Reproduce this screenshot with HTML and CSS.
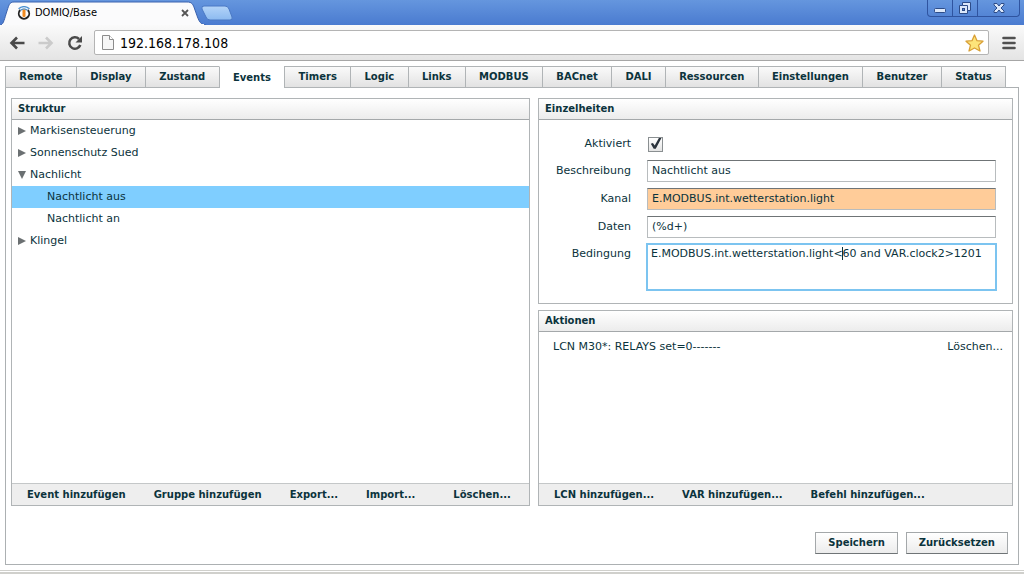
FILE: index.html
```html
<!DOCTYPE html>
<html lang="de">
<head>
<meta charset="utf-8">
<title>DOMIQ/Base</title>
<link rel="stylesheet" href="styles.css">
</head>
<body>
<header class="titlebar">
  <div class="browser-tab">
    <svg class="tab-shape" viewBox="0 0 240 24" aria-hidden="true">
      <defs>
        <linearGradient id="newtab" x1="0" y1="0" x2="0" y2="1"><stop offset="0" stop-color="#b4d4f8"/><stop offset="1" stop-color="#8cbaf0"/></linearGradient>
      </defs>
      <path d="M0 24C3 24 4 20 6 13C9 4 9 1 14 1H187C192 1 193 3 195 9C198 17 199 24 206 24Z" fill="#fbfbfc"/>
      <path d="M0 24C3 24 4 20 6 13C9 4 9 1 14 1H187C192 1 193 3 195 9C198 17 199 24 206 24" fill="none" stroke="#3b62ae"/>
      <rect x="2" y="23" width="202" height="1" fill="#fbfbfc"/>
      <path d="M204 5H225Q228 5 229 8L232 16Q233 19 230 19H210Q207 19 206 16L202 8Q201 5 204 5Z" fill="url(#newtab)" stroke="#4a78c4"/>
    </svg>
    <svg class="favicon" viewBox="0 0 14 14" aria-hidden="true">
      <path d="M3.2 4A5.2 5.2 0 1 0 10.800 4" fill="none" stroke="#222" stroke-width="1.900"/>
      <path d="M1.500 2.800Q7-1.500 12.500 2.800M3.500 4.300Q7 1.600 10.500 4.300" fill="none" stroke="#4a90d0" stroke-width="1.400"/>
      <rect x="5.500" y="3.500" width="3" height="7.500" rx="1" fill="#f08a20"/>
    </svg>
    <span class="tab-title">DOMIQ/Base</span>
    <button class="icon-btn tab-close" aria-label="Tab schließen"><svg width="8" height="8" viewBox="0 0 8 8"><path d="M1 1L7 7M7 1L1 7" stroke="#555" stroke-width="1.800"/></svg></button>
  </div>
  <div class="window-controls">
    <button aria-label="Minimieren"><svg width="14" height="14" viewBox="0 0 14 14"><rect x="1.500" y="7.500" width="11" height="4" rx="1" fill="#dce8fa" stroke="#2d4c88"/></svg></button>
    <button aria-label="Wiederherstellen"><svg width="14" height="14" viewBox="0 0 14 14"><path d="M4.500 1.500H12.500V9.500H9.500V12.500H1.500V4.500H4.500Z" fill="#dce8fa" stroke="#2d4c88"/><path d="M4.500 4.500H9.500V9.500" fill="none" stroke="#2d4c88"/><rect x="4.500" y="7.500" width="2" height="2" fill="#5a88d8" stroke="#2d4c88"/></svg></button>
    <button class="close" aria-label="Schließen"><svg width="12" height="12" viewBox="0 0 12 12"><path d="M1 1.500H4L6 4L8 1.500H11V3L8 6L11 9V10.500H8L6 8L4 10.500H1V9L4 6L1 3Z" fill="#dce8fa" stroke="#2d4c88"/></svg></button>
  </div>
</header>
<nav class="toolbar" aria-label="Navigation">
  <button class="icon-btn" aria-label="Zurück"><svg width="16" height="14" viewBox="0 0 16 14"><path d="M8 1.500L2.500 7L8 12.500M3 7H15.500" fill="none" stroke="#4a4a4a" stroke-width="2.600"/></svg></button>
  <button class="icon-btn" aria-label="Vor"><svg width="16" height="14" viewBox="0 0 16 14"><path d="M8 1.500L13.500 7L8 12.500M13 7H.5" fill="none" stroke="#cbcbcb" stroke-width="2.600"/></svg></button>
  <button class="icon-btn" aria-label="Neu laden"><svg width="16" height="16" viewBox="0 0 16 16"><path d="M13.300 10A5.700 5.700 0 1 1 12 4" fill="none" stroke="#4a4a4a" stroke-width="2.500"/><path d="M15 1V7.500H8.500Z" fill="#4a4a4a"/></svg></button>
  <div class="omnibox">
    <svg width="12" height="15" viewBox="0 0 12 15" aria-hidden="true"><path d="M.5.5H7.500L11.500 4.500V14.500H.5Z" fill="#f6f6f6" stroke="#8c8c8c"/><path d="M7.500.5V4.500H11.500" fill="#fff" stroke="#8c8c8c"/></svg>
    <input class="url" aria-label="Adresse" value="192.168.178.108">
    <button class="icon-btn" aria-label="Lesezeichen"><svg width="19" height="18" viewBox="0 0 19 18"><path d="M9.500 1L12 6.700L18 7.200L13.500 11.200L15 17L9.500 14L4 17L5.500 11.200L1 7.200L7 6.700Z" fill="#fde47a" stroke="#d9a036" stroke-width="1.300" stroke-linejoin="round"/></svg></button>
  </div>
  <button class="icon-btn menu" aria-label="Menü"><svg width="14" height="14" viewBox="0 0 14 14"><path d="M1.500 2H12.500M1.500 7H12.500M1.500 12H12.500" stroke="#505050" stroke-width="2.600" stroke-linecap="round"/></svg></button>
</nav>
<main class="app">
  <nav class="tabs" aria-label="Bereiche">
    <button>Remote</button><button>Display</button><button>Zustand</button><button class="active">Events</button><button>Timers</button><button>Logic</button><button>Links</button><button>MODBUS</button><button>BACnet</button><button>DALI</button><button>Ressourcen</button><button>Einstellungen</button><button>Benutzer</button><button>Status</button>
  </nav>
  <div class="page">
    <div class="columns">
      <section class="panel structure">
        <h2>Struktur</h2>
        <ul class="tree">
          <li><i class="arrow"></i>Markisensteuerung</li>
          <li><i class="arrow"></i>Sonnenschutz Sued</li>
          <li><i class="arrow open"></i>Nachlicht</li>
          <li class="child selected">Nachtlicht aus</li>
          <li class="child">Nachtlicht an</li>
          <li><i class="arrow"></i>Klingel</li>
        </ul>
        <footer class="actions">
          <button>Event hinzufügen</button><button>Gruppe hinzufügen</button><button>Export...</button><button>Import...</button><button class="delete">Löschen...</button>
        </footer>
      </section>
      <div class="side">
        <section class="panel">
          <h2>Einzelheiten</h2>
          <form class="details">
            <label for="active">Aktiviert</label>
            <input class="check" type="checkbox" id="active" checked>
            <label for="desc">Beschreibung</label>
            <input class="field" id="desc" value="Nachtlicht aus">
            <label for="channel">Kanal</label>
            <input class="field warn" id="channel" value="E.MODBUS.int.wetterstation.light">
            <label for="data">Daten</label>
            <input class="field" id="data" value="(%d+)">
            <label class="top" for="cond">Bedingung</label>
            <div class="area-wrap">
              <textarea class="area" id="cond" spellcheck="false">E.MODBUS.int.wetterstation.light&lt;60 and VAR.clock2&gt;1201</textarea>
              <span class="caret"></span>
            </div>
          </form>
        </section>
        <section class="panel actions-panel">
          <h2>Aktionen</h2>
          <div class="action-row"><span>LCN M30*: RELAYS set=0-------</span><button>Löschen...</button></div>
          <footer class="actions">
            <button>LCN hinzufügen...</button><button>VAR hinzufügen...</button><button>Befehl hinzufügen...</button>
          </footer>
        </section>
      </div>
    </div>
    <div class="submit">
      <button>Speichern</button><button>Zurücksetzen</button>
    </div>
  </div>
</main>
<div class="window-edge"></div>
</body>
</html>
```
FILE: styles.css
```css
* { box-sizing: border-box; }
body {
  margin: 0;
  min-height: 100vh;
  display: flex;
  flex-direction: column;
  background: #fff;
  color: #0b333c;
  font: 11px/22px "DejaVu Sans", Verdana, sans-serif;
}
button, input, textarea { font: inherit; color: inherit; margin: 0; }
button { border: 0; background: none; padding: 0; white-space: nowrap; }
svg { display: block; }
h2, ul { margin: 0; padding: 0; }

.titlebar {
  display: flex;
  justify-content: space-between;
  align-items: flex-start;
  height: 25px;
  background: linear-gradient(#6596de, #4a7bd0);
}
.browser-tab {
  position: relative;
  display: flex;
  align-items: center;
  width: 192px;
  height: 25px;
  padding-left: 17px;
  font: 11px/25px "DejaVu Sans Condensed", sans-serif;
  color: #000;
}
.tab-shape { position: absolute; left: 0; top: 1px; width: 240px; height: 24px; }
.favicon { position: relative; width: 14px; height: 14px; margin-right: 4px; }
.tab-title { position: relative; flex: 1; }
.tab-close { position: relative; margin-right: 3px; }
.icon-btn { display: flex; align-items: center; }

.window-controls {
  display: flex;
  height: 17px;
  margin-right: 4px;
  border: 1px solid #2f54a0;
  border-top: 0;
  border-radius: 0 0 4px 4px;
}
.window-controls button {
  display: flex;
  align-items: center;
  justify-content: center;
  width: 25px;
  border-right: 1px solid #2f54a0;
}
.window-controls .close { width: 41px; border-right: 0; }

.toolbar {
  display: flex;
  align-items: center;
  gap: 13px;
  height: 36px;
  padding: 0 9px;
  background: linear-gradient(#fafafa, #e4e4e4);
  border-bottom: 1px solid #a6a6a6;
}
.omnibox {
  flex: 1;
  display: flex;
  align-items: center;
  gap: 6px;
  height: 25px;
  margin-left: -2px;
  padding: 0 4px 0 7px;
  background: #fff;
  border: 1px solid #b4b4b4;
  border-radius: 2px;
}
.url {
  flex: 1;
  min-width: 0;
  border: 0;
  padding: 0;
  outline: 0;
  color: #000;
  font: 14px/20px "DejaVu Sans Condensed", sans-serif;
}
.menu { margin-right: -1px; }

.app {
  flex: 1;
  display: flex;
  flex-direction: column;
  padding: 5px;
}
.tabs { display: flex; position: relative; height: 22px; margin-right: 13px; }
.tabs button {
  flex: 1 0 auto;
  height: 22px;
  padding: 0 13px;
  border: 1px solid #b0b4b6;
  border-right: 0;
  background: linear-gradient(#fafafa, #e2e2e2);
  font-size: 10px;
  font-weight: bold;
  line-height: 20px;
}
.tabs button:last-child { border-right: 1px solid #b0b4b6; }
.tabs .active { background: #fff; border-top-color: #fff; border-bottom: 0; height: 22px; }
.page {
  flex: 1;
  display: flex;
  flex-direction: column;
  margin-top: -1px;
  padding: 10px 5px;
  border: 1px solid #acb0b2;
}
.columns {
  flex: 1;
  display: grid;
  grid-template-columns: 519fr 475fr;
  gap: 8px;
}
.side { display: flex; flex-direction: column; gap: 6px; }
.panel {
  display: flex;
  flex-direction: column;
  border: 1px solid #b0b4b6;
}
.panel h2 {
  height: 21px;
  padding: 0 6px;
  border-bottom: 1px solid #a4a8aa;
  background: linear-gradient(#fff, #ececec);
  font-size: 10px;
  line-height: 19px;
}
.tree { flex: 1; list-style: none; }
.tree li { display: flex; align-items: center; height: 22px; padding-left: 6px; }
.tree .child { padding-left: 35px; }
.tree .selected { background: #7fceff; }
.arrow {
  width: 8px;
  height: 8px;
  margin-right: 4px;
  background: #6b7072;
  clip-path: polygon(0 0, 100% 50%, 0 100%);
}
.arrow.open { clip-path: polygon(0 0, 100% 0, 50% 100%); }
.actions {
  display: flex;
  gap: 28px;
  height: 22px;
  padding-left: 15px;
  background: #eee;
  border-top: 1px solid #c4c7c8;
  font-size: 10px;
  font-weight: bold;
  line-height: 20px;
}
.actions .delete { margin-left: 10px; }

.details {
  display: grid;
  grid-template-columns: 92px 1fr;
  column-gap: 16px;
  row-gap: 6px;
  align-items: center;
  padding: 14px 16px 13px 0;
}
.details label { text-align: right; line-height: 20px; }
.details .top { align-self: start; }
.check {
  appearance: none;
  width: 15px;
  height: 15px;
  margin: 1px;
  border: 1px solid #8a8f91;
  background: linear-gradient(#fff, #e4e4e4);
}
.check:checked::after {
  content: "";
  display: block;
  height: 13px;
  background: #2b333c;
  clip-path: polygon(14% 48%, 30% 42%, 44% 62%, 76% 4%, 96% 4%, 52% 86%, 36% 86%);
}
.field {
  width: 100%;
  height: 22px;
  padding: 0 4px;
  border: 1px solid #b8bcbe;
  border-top-color: #6f7476;
  background: #fff;
}
.warn { background: #ffcc99; }
.area-wrap { position: relative; }
.area {
  display: block;
  width: 100%;
  height: 46px;
  padding: 1px 3px;
  border: 1px solid #a4b4bc;
  outline: 2px solid #7cc4f0;
  outline-offset: -1px;
  resize: none;
  overflow: hidden;
  line-height: 16px;
}
.caret { position: absolute; left: 195px; top: 3px; width: 1px; height: 13px; background: #0b333c; }

.actions-panel { flex: 1; }
.action-row {
  flex: 1;
  display: flex;
  justify-content: space-between;
  align-items: flex-start;
  padding: 4px 9px 0 14px;
}
.submit { display: flex; justify-content: flex-end; gap: 8px; padding: 26px 5px 0 0; }
.submit button {
  height: 22px;
  padding: 0 12px;
  border: 1px solid #a4a8aa;
  border-bottom-color: #6f7476;
  background: linear-gradient(#fff, #ececec);
  font-size: 10px;
  font-weight: bold;
  line-height: 20px;
}
.window-edge { height: 4px; border-top: 1px solid #d0d0cc; border-bottom: 2px solid #d0d0cc; background: #fff; }
```
